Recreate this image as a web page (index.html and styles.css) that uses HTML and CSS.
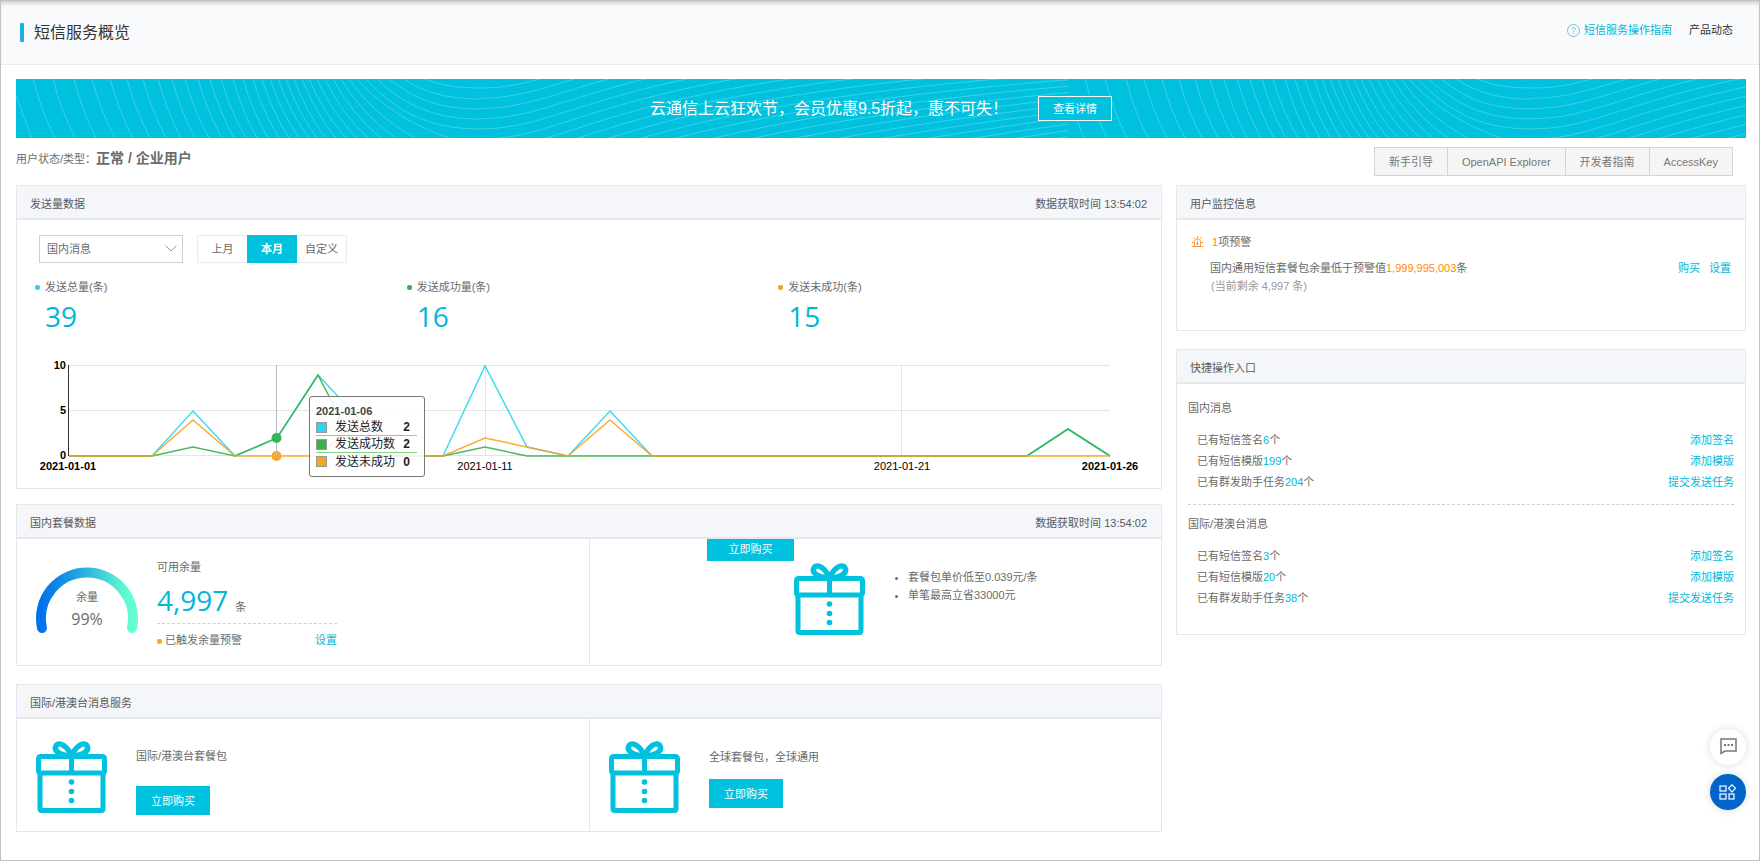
FILE: index.html
```html
<!DOCTYPE html>
<html lang="zh-CN">
<head>
    <meta charset="UTF-8">
    <meta name="viewport" content="width=device-width, initial-scale=1.0">
    <title>短信服务概览</title>
    <link rel="stylesheet" href="styles.css">
</head>
<body>
    <!-- shared gift icon -->
    <svg class="sprite" aria-hidden="true">
        <symbol id="gift" viewBox="0 0 71 72">
            <g fill="none" stroke="#00c1de" stroke-width="5">
                <path d="M34 14.500C24 14.500 18.500 10 19.500 6C21 1 28 1 35.500 14" stroke-width="5.500"/>
                <path d="M37 14.500C47 14.500 52.500 10 51.500 6C50 1 43 1 35.500 14" stroke-width="5.500"/>
                <rect x="2.500" y="15.500" width="66" height="16.500" rx="2"/>
                <path d="M4 32V67.500Q4 69.500 6 69.500H65Q67 69.500 67 67.500V32"/>
                <path d="M35.500 14V33"/>
            </g>
            <g fill="#00c1de">
                <circle cx="35.500" cy="41" r="2.800"/>
                <circle cx="35.500" cy="50.500" r="2.800"/>
                <circle cx="35.500" cy="59.500" r="2.800"/>
            </g>
        </symbol>
    </svg>

    <header class="page-header">
        <h1>短信服务概览</h1>
        <nav class="header-links">
            <a href="#" class="guide">
                <svg width="13" height="13" viewBox="0 0 13 13" fill="none" stroke="#6fc3dd">
                    <circle cx="6.500" cy="6.500" r="6"/>
                    <path d="M4.800 5.200C4.800 2.900 8.300 2.900 8.300 5C8.300 6.300 6.500 6.300 6.500 7.800M6.500 8.800V10"/>
                </svg>
                短信服务操作指南
            </a>
            <a href="#" class="news">产品动态</a>
        </nav>
    </header>

    <main>
        <section class="banner">
            <svg class="banner-bg" width="100%" height="59" aria-hidden="true">
                <defs>
                    <pattern id="waves" width="1052" height="59" patternUnits="userSpaceOnUse">
                        <path id="wave-lines" fill="none" stroke="#fff" stroke-opacity=".24"/>
                    </pattern>
                </defs>
                <rect width="100%" height="59" fill="url(#waves)"/>
            </svg>
            <span class="banner-text">云通信上云狂欢节，会员优惠9.5折起，惠不可失！</span>
            <button type="button" class="banner-btn">查看详情</button>
        </section>

        <div class="status-row">
            <p>用户状态/类型：<strong>正常 / 企业用户</strong></p>
            <div class="doc-buttons">
                <button type="button">新手引导</button>
                <button type="button">OpenAPI Explorer</button>
                <button type="button">开发者指南</button>
                <button type="button">AccessKey</button>
            </div>
        </div>

        <div class="columns">
            <div class="left">
                <section class="panel">
                    <div class="panel-head"><h2>发送量数据</h2><span>数据获取时间 13:54:02</span></div>
                    <div class="send-body">
                        <div class="toolbar">
                            <div class="select-box">
                                <select aria-label="消息类型">
                                    <option>国内消息</option>
                                    <option>国际/港澳台消息</option>
                                </select>
                                <svg width="12" height="7" viewBox="0 0 12 7" fill="none" stroke="#999"><path d="M.500 .500L6 6L11.500 .500"/></svg>
                            </div>
                            <div class="tabs">
                                <button type="button">上月</button>
                                <button type="button" class="active">本月</button>
                                <button type="button">自定义</button>
                            </div>
                        </div>
                        <div class="stats">
                            <div class="stat total"><p>发送总量(条)</p><b>39</b></div>
                            <div class="stat success"><p>发送成功量(条)</p><b>16</b></div>
                            <div class="stat fail"><p>发送未成功(条)</p><b>15</b></div>
                        </div>
                        <div class="chart">
                            <svg id="chart" viewBox="0 0 1144 138">
                                <g stroke="#e4e4e4">
                                    <path d="M52 15.500H1093M52 60.500H1093M52 105.500H1093M468.500 15V106M884.500 15V106"/>
                                    <path d="M51.500 15V106" stroke="#333"/>
                                    <path d="M259.500 15V106" stroke="#bbb"/>
                                </g>
                                <g id="series" fill="none" stroke-width="1.500"></g>
                                <circle cx="259.500" cy="88" r="5" fill="#36b558"/>
                                <circle cx="259.500" cy="106" r="5" fill="#f8a828"/>
                                <path d="M259.500 93V106" stroke="#bbb"/>
                                <g class="y-labels">
                                    <text x="49" y="19">10</text>
                                    <text x="49" y="64">5</text>
                                    <text x="49" y="109">0</text>
                                </g>
                                <g class="x-labels">
                                    <text x="51" y="120" class="edge">2021-01-01</text>
                                    <text x="468" y="120">2021-01-11</text>
                                    <text x="885" y="120">2021-01-21</text>
                                    <text x="1093" y="120" class="edge">2021-01-26</text>
                                </g>
                            </svg>
                            <div class="tooltip">
                                <p>2021-01-06</p>
                                <ul>
                                    <li class="total"><i></i><span>发送总数</span><b>2</b></li>
                                    <li class="success"><i></i><span>发送成功数</span><b>2</b></li>
                                    <li class="fail"><i></i><span>发送未成功</span><b>0</b></li>
                                </ul>
                            </div>
                        </div>
                    </div>
                </section>

                <section class="panel">
                    <div class="panel-head"><h2>国内套餐数据</h2><span>数据获取时间 13:54:02</span></div>
                    <div class="halves package">
                        <div class="half balance">
                            <div class="gauge">
                                <svg width="102" height="66" viewBox="0 0 102 66">
                                    <defs>
                                        <linearGradient id="arc" gradientUnits="userSpaceOnUse" x1="5" y1="0" x2="97" y2="0">
                                            <stop offset="0" stop-color="#0072ea"/>
                                            <stop offset=".4" stop-color="#23a3e2"/>
                                            <stop offset=".9" stop-color="#5cf8d0"/>
                                            <stop offset="1" stop-color="#66ffd4"/>
                                        </linearGradient>
                                    </defs>
                                    <path d="M6 61A46 46 0 1 1 96 61" fill="none" stroke="url(#arc)" stroke-width="10" stroke-linecap="round"/>
                                </svg>
                                <div class="gauge-text"><span>余量</span><b>99%</b></div>
                            </div>
                            <div class="remain">
                                <p>可用余量</p>
                                <p class="amount"><b>4,997</b>条</p>
                                <p class="warn"><span>已触发余量预警</span><a href="#">设置</a></p>
                            </div>
                        </div>
                        <div class="half promo">
                            <button type="button" class="buy clipped">立即购买</button>
                            <svg class="gift" width="71" height="72"><use href="#gift"/></svg>
                            <ul>
                                <li>套餐包单价低至0.039元/条</li>
                                <li>单笔最高立省33000元</li>
                            </ul>
                        </div>
                    </div>
                </section>

                <section class="panel">
                    <div class="panel-head"><h2>国际/港澳台消息服务</h2></div>
                    <div class="halves global">
                        <div class="half offer">
                            <svg class="gift" width="71" height="72"><use href="#gift"/></svg>
                            <div>
                                <p>国际/港澳台套餐包</p>
                                <button type="button" class="buy">立即购买</button>
                            </div>
                        </div>
                        <div class="half offer tight">
                            <svg class="gift" width="71" height="72"><use href="#gift"/></svg>
                            <div>
                                <p>全球套餐包，全球通用</p>
                                <button type="button" class="buy">立即购买</button>
                            </div>
                        </div>
                    </div>
                </section>
            </div>

            <div class="right">
                <section class="panel">
                    <div class="panel-head"><h2>用户监控信息</h2></div>
                    <div class="monitor">
                        <p class="alarm">
                            <svg width="11" height="11" viewBox="0 0 11 11" fill="none" stroke="#ff9a3c">
                                <path d="M0 10.500H11M2.500 10V5.500A3 2.500 0 0 1 8.500 5.500V10M5.500 0V3M1.500 1.500L3 3M9.500 1.500L8 3M0 6.500H2M9 6.500H11M5.500 5V9M4 7.500H7"/>
                            </svg>
                            <em>1</em>项预警
                        </p>
                        <div class="alarm-row">
                            <span>国内通用短信套餐包余量低于预警值<em>1,999,995,003</em>条</span>
                            <span class="actions"><a href="#">购买</a><a href="#">设置</a></span>
                        </div>
                        <p class="current">(当前剩余 4,997 条)</p>
                    </div>
                </section>

                <section class="panel">
                    <div class="panel-head"><h2>快捷操作入口</h2></div>
                    <div class="quick">
                        <h3>国内消息</h3>
                        <ul>
                            <li><span>已有短信签名<em>6</em>个</span><a href="#">添加签名</a></li>
                            <li><span>已有短信模版<em>199</em>个</span><a href="#">添加模版</a></li>
                            <li><span>已有群发助手任务<em>204</em>个</span><a href="#">提交发送任务</a></li>
                        </ul>
                        <h3 class="split">国际/港澳台消息</h3>
                        <ul>
                            <li><span>已有短信签名<em>3</em>个</span><a href="#">添加签名</a></li>
                            <li><span>已有短信模版<em>20</em>个</span><a href="#">添加模版</a></li>
                            <li><span>已有群发助手任务<em>38</em>个</span><a href="#">提交发送任务</a></li>
                        </ul>
                    </div>
                </section>
            </div>
        </div>
    </main>

    <div class="float-tools">
        <button type="button" aria-label="咨询">
            <svg width="17" height="18" viewBox="0 0 17 18" fill="none" stroke="#777" stroke-width="1.500">
                <path d="M1 1H16V13H5L1 15.500Z"/>
                <path d="M4 7H6M7.500 7H9.500M11 7H13" stroke-width="2"/>
            </svg>
        </button>
        <button type="button" class="blue" aria-label="应用">
            <svg width="18" height="16" viewBox="0 0 18 16" fill="none" stroke="#fff" stroke-width="1.200">
                <rect x="1" y="2" width="6" height="5"/>
                <rect x="1" y="10" width="6" height="5"/>
                <rect x="10" y="10" width="5" height="5"/>
                <path d="M13 .800L16.500 4.300L13 7.800L9.500 4.300Z"/>
            </svg>
        </button>
    </div>

    <script src="script.js"></script>
</body>
</html>
```
FILE: styles.css
```css
* {
    box-sizing: border-box;
}

body {
    margin: 0;
    min-height: 100vh;
    border: 1px solid #c2c2c2;
    font-family: "Liberation Sans", "Noto Sans CJK SC", sans-serif;
    font-size: 11px;
    line-height: 20px;
    color: #6b6b6b;
    background: #fff;
}

h1, h2, h3, p, ul {
    margin: 0;
    padding: 0;
    font-weight: normal;
    font-size: 11px;
}

ul {
    list-style: none;
}

em {
    font-style: normal;
}

a {
    color: #00b7d8;
    text-decoration: none;
}

button, select {
    font: inherit;
    padding: 0;
    cursor: pointer;
}

.sprite {
    position: absolute;
    width: 0;
    height: 0;
}

/* Header */
.page-header {
    display: flex;
    justify-content: space-between;
    height: 64px;
    padding: 0 26px 0 19px;
    background: #f9fafc;
    border-bottom: 1px solid #ebebeb;
    box-shadow: inset 0 4px 4px -2px #c8c8c8;
}

.page-header h1 {
    display: flex;
    align-items: center;
    gap: 10px;
    font-size: 16px;
    color: #333;
}

.page-header h1::before {
    content: "";
    width: 4px;
    height: 19px;
    border-radius: 1px;
    background: linear-gradient(#00c1de, #3a9cf8);
}

.header-links {
    display: flex;
    gap: 17px;
    padding-top: 19px;
}

.header-links .guide {
    display: flex;
    align-items: center;
    gap: 4px;
    height: 20px;
}

.header-links .news {
    color: #333;
}

/* Banner */
main {
    padding: 14px 13px 28px 15px;
}

.banner {
    position: relative;
    display: flex;
    align-items: center;
    justify-content: center;
    gap: 30px;
    height: 59px;
    background: #00c1de;
    color: #fff;
}

.banner-bg {
    position: absolute;
    top: 0;
    left: 0;
}

.banner-text {
    position: relative;
    font-size: 16px;
}

.banner-btn {
    position: relative;
    width: 74px;
    height: 25px;
    border: 1px solid #fff;
    background: #00c1de;
    color: #fff;
}

.status-row {
    display: flex;
    justify-content: space-between;
    padding: 9px 13px 9px 0;
}

.status-row p {
    line-height: 22px;
}

.status-row strong {
    font-size: 14px;
}

.doc-buttons {
    display: flex;
    height: 29px;
}

.doc-buttons button {
    padding: 0 14px;
    border: 1px solid #d4d4d4;
    border-right: 0;
    background: #f5f5f5;
    color: #777;
}

.doc-buttons button:last-child {
    border-right: 1px solid #d4d4d4;
}

/* Panels */
.columns {
    display: grid;
    grid-template-columns: 191fr 95fr;
    gap: 14px;
    align-items: start;
}

.panel {
    margin-bottom: 18px;
    border: 1px solid #e4e8ed;
}

.panel:last-child {
    margin-bottom: 0;
}

.left .panel:first-child {
    margin-bottom: 15px;
}

.panel-head {
    display: flex;
    justify-content: space-between;
    align-items: center;
    height: 34px;
    padding: 3px 14px 0 13px;
    background: #f4f6fa;
    border-bottom: 2px solid #e4e9ee;
    color: #5a5a5a;
}

.toolbar {
    display: flex;
    gap: 14px;
    padding: 15px 0 0 22px;
}

.select-box {
    position: relative;
    width: 144px;
    height: 28px;
}

.select-box select {
    width: 100%;
    height: 100%;
    padding: 0 7px;
    border: 1px solid #d0d0d0;
    border-radius: 0;
    background: #fff;
    color: #6b6b6b;
    appearance: none;
}

.select-box svg {
    position: absolute;
    right: 6px;
    top: 10px;
    pointer-events: none;
}

.tabs {
    display: flex;
}

.tabs button {
    width: 50px;
    height: 28px;
    border: 1px solid #ebebeb;
    background: #fff;
    color: #6b6b6b;
}

.tabs button:first-child {
    border-right: 0;
}

.tabs button:last-child {
    border-left: 0;
}

.tabs .active {
    border-color: #00c1de;
    background: #00c1de;
    color: #fff;
    font-weight: bold;
}

.stats {
    display: grid;
    grid-template-columns: repeat(3, 1fr);
    padding: 14px 11px 0 18px;
}

.stat p {
    display: flex;
    align-items: center;
    gap: 5px;
}

.stat p::before {
    content: "";
    width: 5px;
    height: 5px;
    border-radius: 2px;
    background: var(--series);
}

.stat b {
    display: block;
    padding-left: 10px;
    font: 28px/38px "Open Sans", sans-serif;
    color: #00b7d8;
}

.total {
    --series: #2bd6f0;
}

.success {
    --series: #36b34a;
}

.fail {
    --series: #f7a421;
}

/* Chart */
.chart {
    position: relative;
    margin-top: 15px;
}

.chart svg {
    display: block;
    width: 100%;
}

.chart text {
    font-size: 11px;
    fill: #000;
}

.y-labels {
    text-anchor: end;
    font-weight: bold;
}

.x-labels {
    text-anchor: middle;
}

.x-labels .edge {
    font-weight: bold;
}

.tooltip {
    position: absolute;
    left: 292px;
    top: 46px;
    width: 116px;
    height: 81px;
    padding: 6px 7px 0 6px;
    border: 1px solid #777;
    border-radius: 3px;
    background: rgba(255, 255, 255, .85);
    color: #222;
}

.tooltip p {
    line-height: 16px;
    font-weight: bold;
    color: #444;
}

.tooltip li {
    display: flex;
    align-items: center;
    height: 17px;
    padding-right: 7px;
    border-bottom: 1px solid #86d28a;
    font-size: 12px;
}

.tooltip li:last-child {
    border-bottom: 0;
}

.tooltip i {
    width: 11px;
    height: 11px;
    margin-right: 8px;
    border: 1px solid #999;
    background: var(--series);
}

.tooltip b {
    margin-left: auto;
}

/* Package panels */
.halves {
    display: grid;
    grid-template-columns: 1fr 1fr;
}

.half {
    display: flex;
    align-items: flex-start;
}

.half + .half {
    border-left: 1px solid #e4e8ed;
}

.package {
    height: 126px;
}

.gauge {
    position: relative;
    margin: 28px 0 0 19px;
}

.gauge svg {
    display: block;
}

.gauge-text {
    position: absolute;
    top: 20px;
    left: 0;
    width: 100%;
    text-align: center;
}

.gauge-text span, .gauge-text b {
    display: block;
}

.gauge-text b {
    font: 16px/24px "Open Sans", sans-serif;
}

.remain {
    width: 180px;
    margin: 18px 0 0 19px;
}

.amount {
    display: flex;
    align-items: baseline;
    gap: 7px;
    height: 47px;
    border-bottom: 1px dashed #d0d0d0;
}

.amount b {
    font: 28px/46px "Open Sans", sans-serif;
    color: #00b7d8;
}

.warn {
    display: flex;
    justify-content: space-between;
    padding-top: 6px;
}

.warn span::before {
    content: "";
    display: inline-block;
    width: 5px;
    height: 5px;
    margin-right: 3px;
    border-radius: 2px;
    background: #fba919;
}

.buy {
    width: 74px;
    height: 29px;
    border: 0;
    background: #00c1de;
    color: #fff;
}

.clipped {
    width: 87px;
    height: 22px;
    margin-left: 117px;
    padding-bottom: 4px;
}

.promo .gift {
    margin-top: 24px;
}

.promo ul {
    margin: 29px 0 0 43px;
    line-height: 18px;
    list-style: disc;
}

.global {
    height: 112px;
}

.offer .gift {
    margin: 22px 29px 0 19px;
}

.offer p {
    margin: 27px 0 20px;
}

.offer .buy {
    display: block;
}

.tight p {
    margin: 28px 0 12px;
}

/* Right column */
.monitor {
    height: 110px;
    padding: 12px 14px 0 15px;
}

.monitor em {
    color: #ff8a00;
}

.alarm svg {
    margin-right: 6px;
    vertical-align: -1px;
}

.alarm-row {
    display: flex;
    justify-content: space-between;
    padding: 6px 0 0 18px;
}

.actions {
    display: flex;
    gap: 9px;
}

.current {
    padding-left: 19px;
    line-height: 16px;
    color: #999;
}

.quick {
    height: 250px;
    padding: 14px 11px 0;
}

.quick ul {
    padding: 12px 0 0 9px;
}

.quick li {
    display: flex;
    justify-content: space-between;
    line-height: 21px;
}

.quick em {
    color: #00b7d8;
}

.quick .split {
    margin-top: 11px;
    padding-top: 9px;
    border-top: 1px dashed #d0d0d0;
}

/* Floating buttons */
.float-tools {
    position: fixed;
    right: 14px;
    bottom: 51px;
    display: grid;
    gap: 9px;
}

.float-tools button {
    display: grid;
    place-items: center;
    width: 36px;
    height: 36px;
    border: 0;
    border-radius: 50%;
    background: #fff;
    box-shadow: 0 0 8px rgba(0, 0, 0, .14);
}

.float-tools .blue {
    background: #0064c8;
}
```
FILE: script.js
```js
// banner curves: x at the top edge and x at the bottom edge
const top_x = [17, 37, 58, 76, 94, 111, 127, 142, 156, 169, 182, 194, 205, 217, 227, 237, 246, 254, 262, 270, 278, 286, 293, 301, 309, 317, 325, 333, 341];
const bottom_x = [39, 59, 80, 99, 117, 134, 150, 165, 179, 193, 206, 218, 230, 241, 252, 263, 273, 283, 293, 301, 310, 320, 330, 341, 352, 365, 380, 399, 433];
let d = "M0 16Q7 37 16 59";

top_x.forEach((x, i) => {
    const w = bottom_x[i] - x;
    d += `M${x} 0Q${x + w * 0.38} ${30 + w * 0.1} ${bottom_x[i]} 59`;
});

// curves that turn inside the banner
[[409, 9], [388, 20], [373, 30], [361, 40], [350, 50]].forEach(([x, y]) => {
    const w = 465 - x;
    d += `M${x} 0C${x + w * 0.3} ${y * 0.75} ${x + w * 0.6} ${y} 465 ${y}`;
});

for (let y = 9; y < 210; y += 10.2) {
    d += `M465 ${y}C560 ${y} 600 ${y - 75} 1052 ${y * 0.62 - 68}`;
}
document.getElementById("wave-lines").setAttribute("d", d);

// daily values, 2021-01-01 to 2021-01-26
const series = [
    { color: "#2bd6f0", values: [0, 0, 0, 5, 0, 2, 9, 4, 0, 0, 10, 1, 0, 5, 0, 0, 0, 0, 0, 0, 0, 0, 0, 0, 3, 0] },
    { color: "#36b34a", values: [0, 0, 0, 1, 0, 2, 9, 0, 0, 0, 1, 0, 0, 0, 0, 0, 0, 0, 0, 0, 0, 0, 0, 0, 3, 0] },
    { color: "#f7a421", values: [0, 0, 0, 4, 0, 0, 0, 4, 0, 0, 2, 1, 0, 4, 0, 0, 0, 0, 0, 0, 0, 0, 0, 0, 0, 0] }
];

document.getElementById("series").innerHTML = series.map(s => {
    const points = s.values.map((v, i) => `${Math.round(51.5 + i * 41.66)},${106 - v * 9}`).join(" ");
    return `<polyline points="${points}" stroke="${s.color}" stroke-opacity=".9"/>`;
}).join("");
```
